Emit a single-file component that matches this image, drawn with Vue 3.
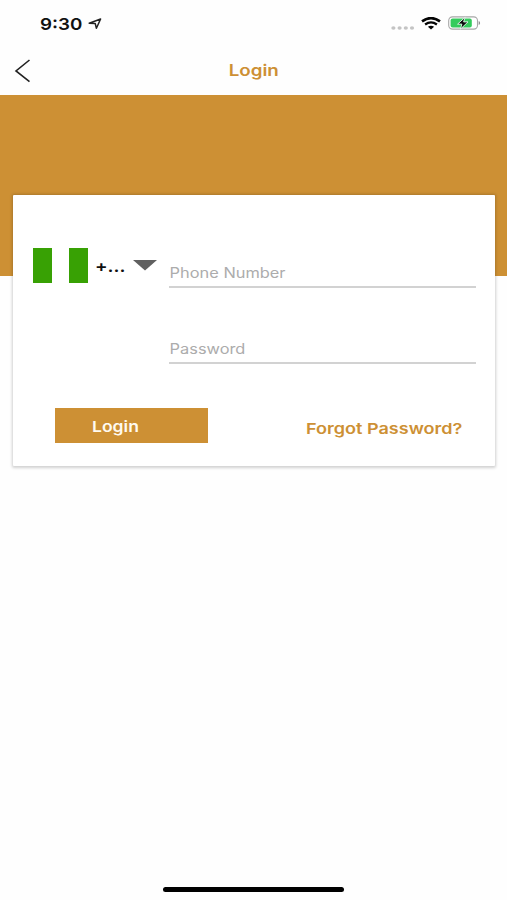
<script setup>
import { ref } from 'vue'

const phone = ref('')
const password = ref('')
</script>

<template>
  <main class="screen">
    <div class="status">
      <div class="clock">
        <span class="time wide">9:30</span>
        <svg class="location" width="14" height="12" viewBox="0 0 14 12">
          <path d="M1.2 5.3 12.6 1 8.4 10.2 7.2 5.5Z" fill="none" stroke="#222" stroke-width="1.5" stroke-linejoin="round" />
        </svg>
      </div>
      <div class="indicators">
        <svg class="signal" width="24" height="4" viewBox="0 0 24 4" fill="#c4c4c4">
          <ellipse cx="2.4" cy="2" rx="2.1" ry="1.7" />
          <ellipse cx="8.6" cy="2" rx="2.1" ry="1.7" />
          <ellipse cx="14.8" cy="2" rx="2.1" ry="1.7" />
          <ellipse cx="21" cy="2" rx="2.1" ry="1.7" />
        </svg>
        <svg class="wifi" width="20" height="13" viewBox="0 0 20 13" fill="none" stroke="#050505">
          <path d="M1 4.4Q10-2.2 19 4.4" stroke-width="2.6" />
          <path d="M4.1 7.5Q10 3.2 15.9 7.5" stroke-width="2.3" />
          <path d="M6.9 9.8Q10 7.7 13.1 9.8L10 12.4Z" fill="#050505" stroke="none" />
        </svg>
        <svg class="battery" width="33" height="14" viewBox="0 0 33 14">
          <rect x=".7" y=".9" width="28.8" height="12.2" rx="3.8" fill="#fff" stroke="#a7a7a7" stroke-width="1.1" />
          <rect x="2.6" y="2.6" width="21.2" height="8.8" rx="2" fill="#34cb5c" />
          <path d="M30.7 5v4q1.4-.6 1.4-2t-1.4-2Z" fill="#8e8e8e" />
          <path d="M17.2 1.2 9.6 8.1h4.3l-1.5 5L20 5.9h-4.4Z" fill="#0a0a0a" stroke="#e9fff0" stroke-width=".9" />
        </svg>
      </div>
    </div>

    <header class="nav">
      <button class="back" aria-label="Back">
        <svg width="17" height="24" viewBox="0 0 17 24">
          <path d="M15.5 1 2 12 15.5 22.6" fill="none" stroke="#222" stroke-width="1.6" />
        </svg>
      </button>
      <h1 class="title wide">Login</h1>
    </header>

    <div class="banner"></div>

    <form class="card" @submit.prevent>
      <div class="row">
        <div class="country">
          <span class="flag"><i></i><i></i></span>
          <span class="code wide">+...</span>
          <svg class="caret" width="24" height="11" viewBox="0 0 24 11"><path d="M0 0h24L12 10.5Z" fill="#606060" /></svg>
        </div>
        <div class="fields">
          <label class="field"><input v-model="phone" class="wide" type="tel" placeholder="Phone Number" /></label>
          <label class="field"><input v-model="password" class="wide" type="password" placeholder="Password" /></label>
        </div>
      </div>
      <div class="actions">
        <button class="submit"><span class="wide">Login</span></button>
        <a class="forgot wide">Forgot Password?</a>
      </div>
    </form>

    <div class="home"></div>
  </main>
</template>

<style>
body { background: #fff; }
</style>

<style scoped>
* { box-sizing: border-box; }
.screen {
  display: flex;
  flex-direction: column;
  width: 507px;
  height: 900px;
  overflow: hidden;
  background: #fefefe;
  font-family: Inter, "Liberation Sans", sans-serif;
}
button { padding: 0; border: 0; background: none; font: inherit; }
.wide { display: inline-block; transform: scaleX(1.17); transform-origin: left center; white-space: nowrap; }
.status { display: flex; justify-content: space-between; height: 47px; padding: 0 26px 0 40px; }
.clock { display: flex; padding-top: 14px; }
.time { width: 48px; font-size: 16.5px; line-height: 20px; font-weight: 600; color: #111; transform: scaleX(1.14); }
.location { margin-top: 4px; }
.indicators { display: flex; padding-top: 16px; }
.signal { margin: 9.5px 6px 0 0; }
.wifi { margin: 1px 7px 0 0; }
.nav { display: grid; grid-template-columns: 1fr auto 1fr; height: 48px; }
.back { justify-self: start; align-self: start; padding: 11px 0 0 14px; height: 36px; }
.back svg { display: block; }
.title { margin: 14px 0 0; font-size: 15.5px; line-height: 20px; font-weight: 600; color: #cd9034; transform: scaleX(1.21); transform-origin: center; }
.banner { flex: none; height: 181px; background: #cd9034; }
.card {
  position: relative;
  flex: none;
  height: 271px;
  margin: -81px 12px 0 13px;
  padding: 52.5px 19px 0;
  background: #fff;
  border-radius: 1px;
  box-shadow: 0 .5px 3px 1px rgba(0, 0, 0, .18);
}
.row { display: flex; }
.country { display: flex; width: 137px; }
.flag { display: flex; justify-content: space-between; width: 56px; height: 35px; padding-left: .5px; }
.flag i { width: 19px; height: 35px; background: #38a104; }
.code { width: 38px; margin: 8px 0 0 7px; font-size: 16px; line-height: 20px; font-weight: 600; color: #111; }
.caret { margin-top: 12.5px; }
.fields { flex: 1; padding-top: 13.5px; }
.field { display: block; height: 27px; border-bottom: 2px solid #d2d2d2; }
.field + .field { margin-top: 48.5px; }
.field input { display: block; width: 85%; height: 24px; padding: 0 0 0 .5px; border: 0; outline: 0; background: none; font: 400 14px/24px Inter, sans-serif; color: #222; }
.field input::placeholder { color: #acacac; opacity: 1; }
.actions { display: flex; justify-content: space-between; margin-top: 44px; padding: 0 0 0 23px; }
.submit { width: 153px; height: 35px; padding: 2px 0 0 37px; background: #cd9034; text-align: left; font-size: 15px; font-weight: 600; color: #fffaf0; }
.forgot { width: 170px; margin-top: 11px; font-size: 15px; line-height: 20px; font-weight: 600; color: #cd9034; transform: scaleX(1.203); }
.home { width: 181px; height: 5px; margin: auto auto 8px 163px; border-radius: 3px; background: #000; }
</style>
